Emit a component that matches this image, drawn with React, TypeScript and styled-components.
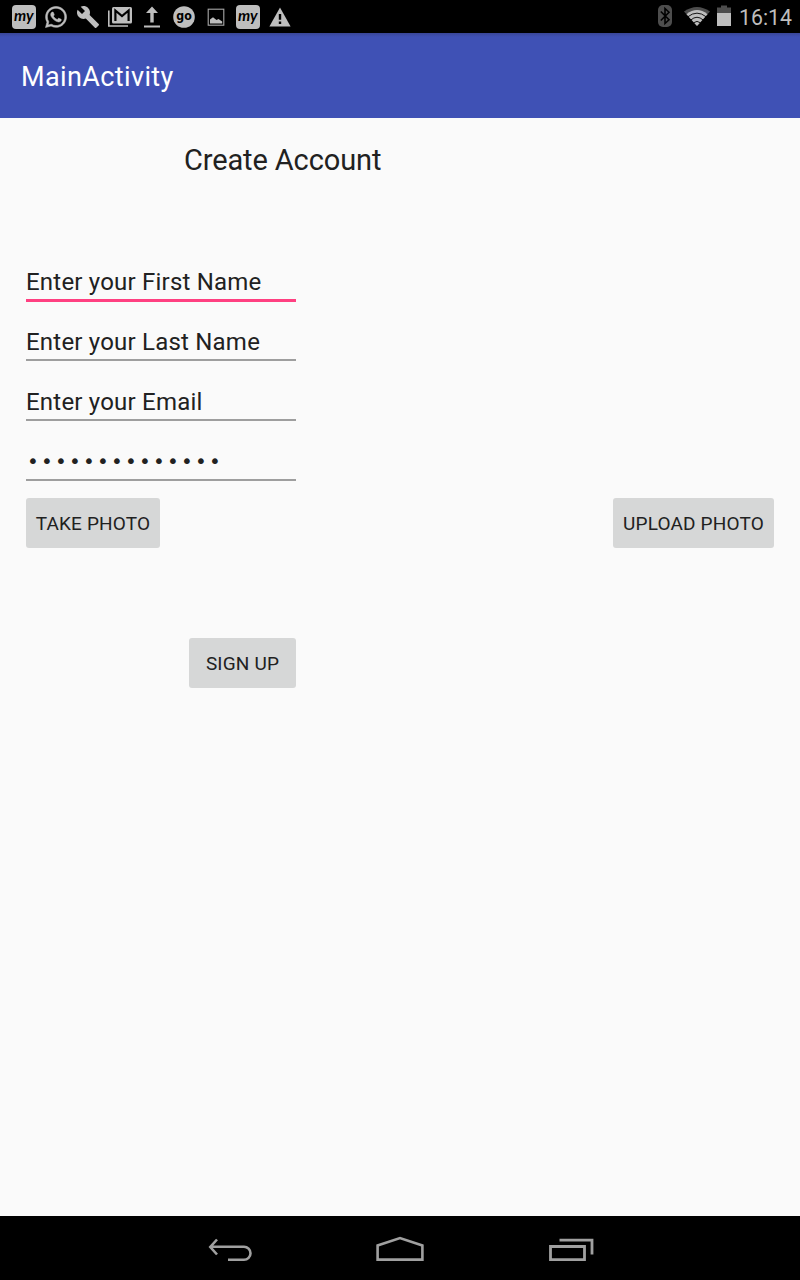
import React from "react";
import styled, { createGlobalStyle } from "styled-components";
import { MdBuild } from "react-icons/md";
import { FaWhatsapp } from "react-icons/fa";

const GlobalStyle = createGlobalStyle`
  *, *::before, *::after { box-sizing: border-box; }
  body { margin: 0; background: #fafafa; }
`;

const Screen = styled.div`
  display: flex;
  flex-direction: column;
  width: 800px;
  height: 1280px;
  overflow: hidden;
  background: #fafafa;
  color: #212121;
  font-family: Roboto, sans-serif;
`;

const StatusBar = styled.header`
  display: flex;
  flex: none;
  justify-content: space-between;
  height: 33px;
  padding-left: 8px;
  padding-right: 8px;
  background: #000;
  color: #bebebe;
`;

const Notifications = styled.div`
  display: flex;
`;

const IconCell = styled.span`
  display: flex;
  align-items: center;
  justify-content: center;
  width: 32px;
  height: 33px;

  svg { display: block; }
`;

const SystemIcons = styled.div`
  display: flex;
  align-items: flex-start;

  svg { display: block; }
`;

const Clock = styled.span`
  margin-left: 7px;
  font-size: 21.3px;
  line-height: 35px;
`;

const AppBar = styled.div`
  display: flex;
  flex: none;
  align-items: center;
  height: 85px;
  padding: 2px 0 0 21px;
  background: linear-gradient(#394697 0, #3f51b5 4px);
  color: #fff;
`;

const AppTitle = styled.h1`
  margin: 0;
  font-size: 27px;
  line-height: 32px;
  font-weight: 400;
  letter-spacing: 0.38px;
`;

const Content = styled.main`
  flex: 1;
  padding: 24px 26px 0;
`;

const Heading = styled.h2`
  margin: 0 0 79px 158px;
  font-size: 29px;
  line-height: 36px;
  font-weight: 400;
  letter-spacing: -0.12px;
`;

const Fields = styled.form`
  display: flex;
  flex-direction: column;
  width: 270px;
`;

const Field = styled.div<{ $active?: boolean }>`
  height: 60px;

  &::after {
    content: "";
    display: block;
    height: ${(p) => (p.$active ? "3px" : "2px")};
    background: ${(p) => (p.$active ? "#ff4081" : "#9e9e9e")};
  }
`;

const Value = styled.div`
  height: 42px;
  padding-top: 10px;
  font-size: 24px;
  line-height: 30px;
  white-space: nowrap;
  letter-spacing: 0.21px;
`;

const SecretValue = styled(Value)`
  padding: 9px 0 0 1px;
  font-family: "DejaVu Sans", sans-serif;
  font-size: 20px;
  letter-spacing: 2.2px;
`;

const PhotoActions = styled.div`
  display: flex;
  justify-content: space-between;
  margin-top: 1px;
`;

const SignUpRow = styled.div`
  display: flex;
  justify-content: flex-end;
  width: 270px;
  margin-top: 90px;
`;

const Button = styled.button<{ $width: number }>`
  width: ${(p) => p.$width}px;
  height: 50px;
  padding: 1px 0 0;
  border: 0;
  border-radius: 3px;
  background: #d6d7d7;
  color: #212121;
  font: 400 19px/24px Roboto, sans-serif;
  letter-spacing: 0.18px;
  white-space: nowrap;
`;

const NavBar = styled.nav`
  display: flex;
  flex: none;
  justify-content: space-between;
  height: 64px;
  padding: 0 200px;
  background: #000;

  svg { display: block; }
`;

const MyBadge = () => (
  <svg width="24" height="24" viewBox="0 0 24 24">
    <rect width="24" height="24" rx="4" fill="#bebebe" />
    <text x="2" y="16" fontFamily="Lato, sans-serif" fontStyle="italic" fontWeight="700" fontSize="16" textLength="19.5" lengthAdjust="spacingAndGlyphs" fill="#000">my</text>
  </svg>
);

const MailStack = () => (
  <svg width="24" height="24" viewBox="0 0 24 24" fill="none">
    <path d="M.8 5.5V21H20" stroke="#bebebe" strokeWidth="1.6" />
    <rect x="4" y="2" width="20" height="16.5" rx="1.5" fill="#bebebe" />
    <path d="M7.4 16V5.5L14 11L20.6 5.5V16" stroke="#000" strokeWidth="2.2" />
  </svg>
);

const UploadArrow = () => (
  <svg width="24" height="24" viewBox="0 0 24 24" fill="#bebebe">
    <path d="M12 1.5L18 8H13.7V17.5H10.3V8H6Z" />
    <rect x="4" y="20.5" width="16" height="2" />
  </svg>
);

const GoBadge = () => (
  <svg width="24" height="24" viewBox="0 0 24 24">
    <circle cx="12" cy="12" r="10.8" fill="#bebebe" />
    <text x="12" y="14.5" textAnchor="middle" fontFamily="DejaVu Sans, sans-serif" fontWeight="700" fontSize="11.5" textLength="15.5" lengthAdjust="spacingAndGlyphs" fill="#000">go</text>
  </svg>
);

const Picture = () => (
  <svg width="24" height="24" viewBox="0 0 24 24" fill="none">
    <rect x="4.2" y="4.2" width="15.6" height="16" stroke="#a8a8a8" strokeWidth="1.1" />
    <path d="M6 18.5V14.5L9 12.3L12.5 15L14.5 14L18.2 16.5V18.5Z" fill="#bebebe" />
  </svg>
);

const Alert = () => (
  <svg width="24" height="24" viewBox="0 0 24 24">
    <path d="M12 2.5L22.6 21.5H1.4Z" fill="#bebebe" />
    <path d="M10.8 9H13.2V14.8H10.8ZM10.8 16.5H13.2V19H10.8Z" fill="#000" />
  </svg>
);

const SystemStatus = () => (
  <svg width="76" height="33" viewBox="0 0 76 33" fill="none">
    <rect x="2" y="5" width="14" height="22" rx="5" fill="#4d4d4d" />
    <path d="M4.8 11.5L13 19.8L9 23.5V8.5L13 12.2L4.8 20.5" stroke="#000" strokeWidth="1.6" />
    <path d="M28 11.5Q41 2.5 54 11.5L41 26Z" fill="#4d4d4d" />
    <path d="M30.5 14.2Q41 6 51.5 14.2L41 26Z" fill="#bebebe" />
    <path d="M31.8 16.8Q41 9.5 50.2 16.8M34.8 20Q41 14.5 47.2 20M37.5 22.8Q41 20 44.5 22.8" stroke="#000" strokeWidth="0.9" />
    <path d="M61 7.5H65V5.5H71V7.5H75V13H61Z" fill="#4d4d4d" />
    <rect x="61" y="13" width="14" height="13" fill="#bebebe" />
  </svg>
);

const BackIcon = () => (
  <svg width="60" height="64" viewBox="0 0 60 64" fill="none" stroke="#a0a0a0" strokeWidth="2.6">
    <path d="M17 23.5L10.3 31L17 38.5M10 30.8H44A6.5 6.5 0 0 1 44 43.8H28" />
  </svg>
);

const HomeIcon = () => (
  <svg width="60" height="64" viewBox="0 0 60 64" fill="none" stroke="#a0a0a0" strokeWidth="2.6">
    <path d="M7.6 43.6V29.5L30 22L52.4 29.5V43.6Z" />
  </svg>
);

const RecentIcon = () => (
  <svg width="60" height="64" viewBox="0 0 60 64" fill="none" stroke="#a0a0a0" strokeWidth="2.8">
    <path d="M10.5 30.5H44.5V43.6H10.5Z M19.5 24.2H52V38.5" />
  </svg>
);

const notifications = [
  <MyBadge />,
  <FaWhatsapp size={24} stroke="#bebebe" strokeWidth={12} />,
  <MdBuild size={24} />,
  <MailStack />,
  <UploadArrow />,
  <GoBadge />,
  <Picture />,
  <MyBadge />,
  <Alert />,
];

export default function App() {
  return (
    <Screen>
      <GlobalStyle />
      <StatusBar>
        <Notifications>
          {notifications.map((icon, i) => (
            <IconCell key={i}>{icon}</IconCell>
          ))}
        </Notifications>
        <SystemIcons>
          <SystemStatus />
          <Clock>16:14</Clock>
        </SystemIcons>
      </StatusBar>
      <AppBar>
        <AppTitle>MainActivity</AppTitle>
      </AppBar>
      <Content>
        <Heading>Create Account</Heading>
        <Fields>
          <Field $active><Value>Enter your First Name</Value></Field>
          <Field><Value>Enter your Last Name</Value></Field>
          <Field><Value>Enter your Email</Value></Field>
          <Field><SecretValue>••••••••••••••</SecretValue></Field>
        </Fields>
        <PhotoActions>
          <Button $width={134}>TAKE PHOTO</Button>
          <Button $width={161}>UPLOAD PHOTO</Button>
        </PhotoActions>
        <SignUpRow>
          <Button $width={107}>SIGN UP</Button>
        </SignUpRow>
      </Content>
      <NavBar>
        <BackIcon />
        <HomeIcon />
        <RecentIcon />
      </NavBar>
    </Screen>
  );
}
